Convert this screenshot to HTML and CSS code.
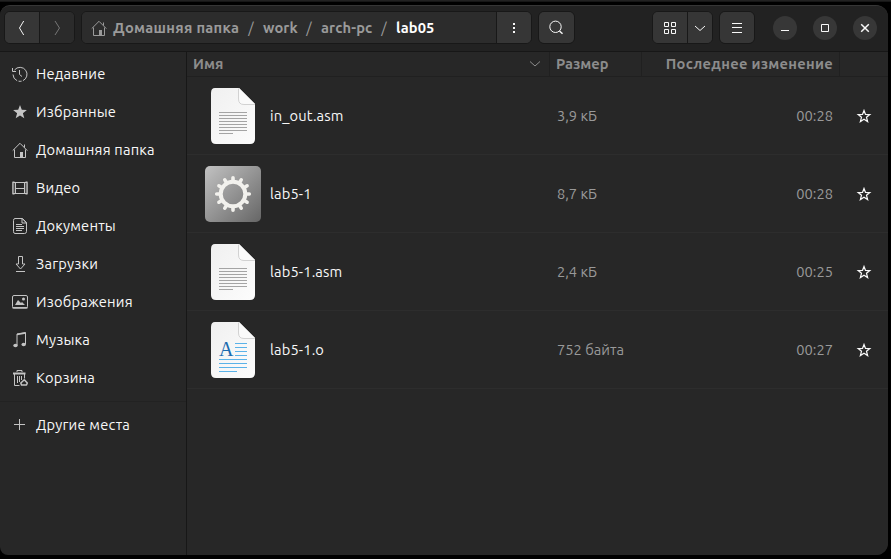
FILE: index.html
```html
<!DOCTYPE html>
<html lang="ru">
<head>
<meta charset="utf-8">
<title>lab05</title>
<link rel="stylesheet" href="styles.css">
</head>
<body>
<svg class="defs" width="0" height="0">
  <defs>
    <linearGradient id="paper" x1="0" y1="0" x2="1" y2="1"><stop offset="0" stop-color="#f0f0f0"/><stop offset="1" stop-color="#fcfcfc"/></linearGradient>
    <linearGradient id="metal" x1="0" y1="0" x2="1" y2="1"><stop offset="0" stop-color="#c2c2c2"/><stop offset="1" stop-color="#666"/></linearGradient>
    <symbol id="home" viewBox="0 0 16 16"><path d="M.7 8.6 8 1.3l7.3 7.3M2.5 7.5v8h11v-8M12.5 5.5v-3" fill="none" stroke="currentColor"/><path d="M8 10h3v5H8z" fill="currentColor"/></symbol>
    <symbol id="star" viewBox="0 0 16 16"><path d="M8 2.500l1.500 3.900 4.300.2-3.300 2.700 1.100 4.200L8 11.200l-3.600 2.300 1.100-4.200L2.200 6.600l4.300-.2z" fill="none" stroke="currentColor" stroke-width="1.250"/></symbol>
    <symbol id="sheet" viewBox="0 0 56 56"><path d="M10 0h24l16 16v35q0 5-5 5H11q-5 0-5-5V5q0-5 4-5z" fill="url(#paper)"/><path d="M34 0l16 16H38q-4.500 0-4.500-4.500z" fill="#fafafa"/><path d="M33.500.5V11q0 5.500 5.500 5.500h11" fill="none" stroke="#d2d2d2"/></symbol>
    <symbol id="text-file" viewBox="0 0 56 56"><use href="#sheet"/><path d="M14 24.500h28M14 27.500h28M14 30.500h28M14 33.500h28M14 36.500h28M14 39.500h28M14 42.500h28M14 45.500h14" stroke="#a4a4a4"/></symbol>
  </defs>
</svg>
<div class="window">
  <header class="bar">
    <div class="group nav">
      <button class="btn"><svg width="16" height="16"><path d="M9.700 1 5.500 8l4.200 7" class="line"/></svg></button>
      <button class="btn off"><svg width="16" height="16"><path d="M6 1l4.500 7L6 15" class="line"/></svg></button>
    </div>
    <div class="group path">
      <div class="crumbs">
        <svg width="16" height="16"><use href="#home"/></svg>
        <span class="c-home">Домашняя папка</span><span class="c-slash">/</span><span class="c-work">work</span><span class="c-slash">/</span><span class="c-arch">arch-pc</span><span class="c-slash">/</span><span class="c-lab">lab05</span>
      </div>
      <button class="btn"><svg width="16" height="16"><path d="M7 3h2v2H7zM7 7h2v2H7zM7 11h2v2H7z" fill="currentColor"/></svg></button>
    </div>
    <div class="group search"><button class="btn"><svg width="16" height="16"><circle cx="6.500" cy="6.800" r="5.700" class="line"/><path d="M10.500 11l3 2.700" class="line thick"/></svg></button></div>
    <div class="spacer"></div>
    <div class="group view">
      <button class="btn"><svg width="16" height="16"><path d="M2.500 2.500h4v4h-4zM9.500 2.500h4v4h-4zM2.500 9.500h4v4h-4zM9.500 9.500h4v4h-4z" class="line"/></svg></button>
      <button class="btn slim"><svg width="16" height="16"><path d="M3 6l5 4.500L13 6" class="line"/></svg></button>
    </div>
    <div class="group menu"><button class="btn"><svg width="16" height="16"><path d="M3 3.500h10M3 7.500h10M3 12.500h10" class="line"/></svg></button></div>
    <div class="controls">
      <button class="round"><svg width="16" height="16"><path d="M4 10.500h8" class="line"/></svg></button>
      <button class="round"><svg width="16" height="16"><path d="M4.500 4.500h7v7h-7z" class="line"/></svg></button>
      <button class="round"><svg width="16" height="16"><path d="M4.200 4.200l7.600 7.600M11.800 4.200l-7.600 7.600" class="line thick"/></svg></button>
    </div>
  </header>
  <div class="body">
    <nav class="side">
      <a class="place"><svg width="16" height="16"><path d="M2.500 4A7 7 0 1 1 1 8.500" class="line" stroke-dasharray="25 1.500 3 1.500"/><path d="M.5 2v3.500H4" class="line"/><path d="M7.500 4v4.500l2.500 2" class="line"/></svg><span>Недавние</span></a>
      <a class="place"><svg width="16" height="16"><path d="M8 1l1.800 4.700 5.100.3-4 3.200 1.400 5L8 11.500l-4.300 2.700 1.400-5L1.100 6l5.100-.3z" fill="currentColor"/></svg><span>Избранные</span></a>
      <a class="place"><svg width="16" height="16"><use href="#home"/></svg><span>Домашняя папка</span></a>
      <a class="place"><svg width="16" height="16"><path d="M1.500 1.500v13M14.500 1.500v13" class="line" stroke-width="2" stroke-dasharray="1 1"/><path d="M1 2.500h14M1 13.500h14M3.500 2v12M12.500 2v12M3.500 8.500h9M.8 2v12M15.200 2v12" class="line"/></svg><span>Видео</span></a>
      <a class="place"><svg width="16" height="16"><path d="M3 .5h7.500l4 4v9q0 2-2 2H3q-1.500 0-1.500-2v-11q0-2 1.500-2z" class="line"/><path d="M10 .5v4.500h4.500zM4 6.500h6M4 8.500h8M4 10.500h8M4 12.500h6" class="line"/></svg><span>Документы</span></a>
      <a class="place"><svg width="16" height="16"><path d="M6.500.5h4v7.500h2.500L8.500 13 4 8h2.500z" class="line"/><path d="M4 15.500h9" class="line"/></svg><span>Загрузки</span></a>
      <a class="place"><svg width="16" height="16"><rect x=".5" y="1.500" width="15" height="12.500" rx="1.500" class="line"/><path d="M3 11l3-5 3 3 1-1 3 3z" fill="currentColor"/><path d="M.5 13.800h15" class="line thick"/><circle cx="11.500" cy="5" r="1.500" fill="currentColor"/></svg><span>Изображения</span></a>
      <a class="place"><svg width="16" height="16"><path d="M5 13V2l8.500-1.500V12" class="line"/><path d="M5 2.500l8.500-1.500" class="line thick"/><ellipse cx="3.500" cy="13.500" rx="2.200" ry="1.800" fill="currentColor"/><ellipse cx="11.700" cy="12.500" rx="2.200" ry="1.800" fill="currentColor"/></svg><span>Музыка</span></a>
      <a class="place"><svg width="16" height="16"><path d="M5 2V.5h5V2" class="line"/><path d="M1 3.500h12.500" stroke="currentColor" stroke-width="2"/><path d="M2.500 4v11.500h5M12.500 4v4.500M5.500 6v7M7.500 6v6M9.500 6v4" class="line"/><path d="M9.500 15h5l.8-2-3-3.300-3.500 3.300z" class="line thick" stroke-linejoin="round"/></svg><span>Корзина</span></a>
      <hr>
      <a class="place"><svg width="16" height="16"><path d="M2 7.500h11M7.500 2v11" class="line"/></svg><span>Другие места</span></a>
    </nav>
    <main class="files">
      <div class="row head">
        <div class="name"><span>Имя</span><svg width="12" height="8"><path d="M1 1.500l5 4.500 5-4.500" class="line"/></svg></div>
        <div class="size"><span>Размер</span></div><div class="time"><span>Последнее изменение</span></div><div class="fav"></div>
      </div>
      <div class="row item"><div class="name"><svg width="56" height="56"><use href="#text-file"/></svg><span>in_out.asm</span></div><div class="size"><span>3,9 кБ</span></div><div class="time"><span>00:28</span></div><div class="fav"><svg width="16" height="16"><use href="#star"/></svg></div></div>
      <div class="row item"><div class="name"><svg width="56" height="56" viewBox="0 0 56 56"><rect width="56" height="56" rx="5" fill="url(#metal)"/><g fill="none" stroke="#f2f1ed"><circle cx="28" cy="28" r="12.300" stroke-width="4"/><path stroke-width="3.600" stroke-linecap="round" d="M28 14v-2.300M28 42v2.300M14 28h-2.300M42 28h2.300M35 15.900l1.200-2M21 40.100l-1.200 2M40.100 21l2-1.200M15.900 35l-2 1.200M40.100 35l2 1.200M15.900 21l-2-1.200M35 40.100l1.200 2M21 15.900l-1.200-2"/></g></svg><span>lab5-1</span></div><div class="size"><span>8,7 кБ</span></div><div class="time"><span>00:28</span></div><div class="fav"><svg width="16" height="16"><use href="#star"/></svg></div></div>
      <div class="row item"><div class="name"><svg width="56" height="56"><use href="#text-file"/></svg><span>lab5-1.asm</span></div><div class="size"><span>2,4 кБ</span></div><div class="time"><span>00:25</span></div><div class="fav"><svg width="16" height="16"><use href="#star"/></svg></div></div>
      <div class="row item"><div class="name"><svg width="56" height="56"><use href="#sheet"/><path d="M30 21.500h12M30 25.500h12M30 29.500h12M30 33.500h12M14 37.500h28M14 41.500h28M14 45.500h28M14 49.500h18" stroke="#5ab2e8"/><text x="14" y="34" class="glyph">A</text></svg><span>lab5-1.o</span></div><div class="size"><span>752 байта</span></div><div class="time"><span>00:27</span></div><div class="fav"><svg width="16" height="16"><use href="#star"/></svg></div></div>
    </main>
  </div>
</div>
</body>
</html>
```
FILE: styles.css
```css
* { box-sizing: border-box; }
body {
  margin: 0; height: 559px; overflow: hidden; padding-top: 5px;
  background: linear-gradient(#222 0 1px, #171717 1px 2px, #000 2px);
  color: #f8f8f8; font: 14.667px/20px Ubuntu, "Noto Sans", sans-serif;
}
.defs { position: absolute; }
.window { width: 888px; height: 550px; border-radius: 10px 12px 12px 8px; background: #272727; overflow: hidden; border-top: 1px solid #363636; }
.bar { display: flex; height: 46px; padding: 5px 11px 7px 4px; background: #222; border-bottom: 1px solid #171717; }
svg { flex: none; display: block; }
.line { fill: none; stroke: currentColor; }
.thick { stroke-width: 1.5; }
button { border: 0; padding: 0; color: inherit; display: flex; align-items: center; justify-content: center; }
.group { display: flex; height: 33px; border: 1px solid #181818; border-radius: 6px; overflow: hidden; background: #363636; }
.btn { flex: 1; background: #363636; }
.btn + .btn, .path .btn { border-left: 1px solid #181818; }
.btn.off { background: #2b2b2b; color: #777; }
.nav { width: 71px; margin-right: 6px; }
.path { width: 451px; margin-right: 6px; }
.path .btn { flex: 0 0 35px; }
.crumbs { flex: 1; display: flex; align-items: center; background: #2c2c2c; color: #9a9a9a; font-weight: 700; padding-left: 9px; }
.crumbs span { white-space: nowrap; }
.c-home { width: 126px; margin-left: 6px; letter-spacing: .29px; }
.c-slash { width: 24px; text-align: center; font-weight: 400; }
.c-work { width: 34px; letter-spacing: .1px; }
.c-arch { width: 51px; letter-spacing: .15px; }
.c-lab { color: #fff; letter-spacing: .1px; }
.search { width: 37px; }
.spacer { flex: 1; }
.view { width: 61px; margin-right: 6px; }
.view .slim { flex: 0 0 25px; }
.menu { width: 36px; margin-right: 18px; }
.controls { display: flex; align-items: center; gap: 16px; height: 33px; }
.round { width: 24px; height: 24px; border-radius: 50%; background: #373737; }
.body { display: flex; height: 503px; }
.side { width: 187px; padding-top: 3px; border-right: 1px solid #171717; letter-spacing: .2px; }
.place { display: flex; align-items: center; height: 38px; padding-left: 12px; gap: 8px; white-space: nowrap; }
.place svg { color: #c4c4c4; }
hr { height: 1px; border: 0; margin: 4px 0; background: #222; }
.files { flex: 1; background: #272727; }
.row { display: grid; grid-template-columns: 362px 92px 198px 49px; }
.row > div { display: flex; align-items: center; white-space: nowrap; }
.head { height: 25px; border-bottom: 1px solid #202020; color: #8c8c8c; font-weight: 700; }
.head > div + div { border-left: 1px solid #202020; }
.head .name { padding: 0 8px 0 6px; justify-content: space-between; }
.head .size { padding-left: 6px; }
.time { justify-content: flex-end; padding-right: 6px; color: #999; }
.head .time { color: inherit; letter-spacing: .3px; }
.item { height: 78px; border-bottom: 1px solid #2d2d2d; }
.item .name { padding-left: 18px; gap: 9px; letter-spacing: .15px; }
.item .size { padding-left: 8px; color: #999; }
.fav { padding-left: 17px; }
.glyph { font: 20px "Liberation Serif", serif; fill: #1b6bb0; letter-spacing: 0; }
```
